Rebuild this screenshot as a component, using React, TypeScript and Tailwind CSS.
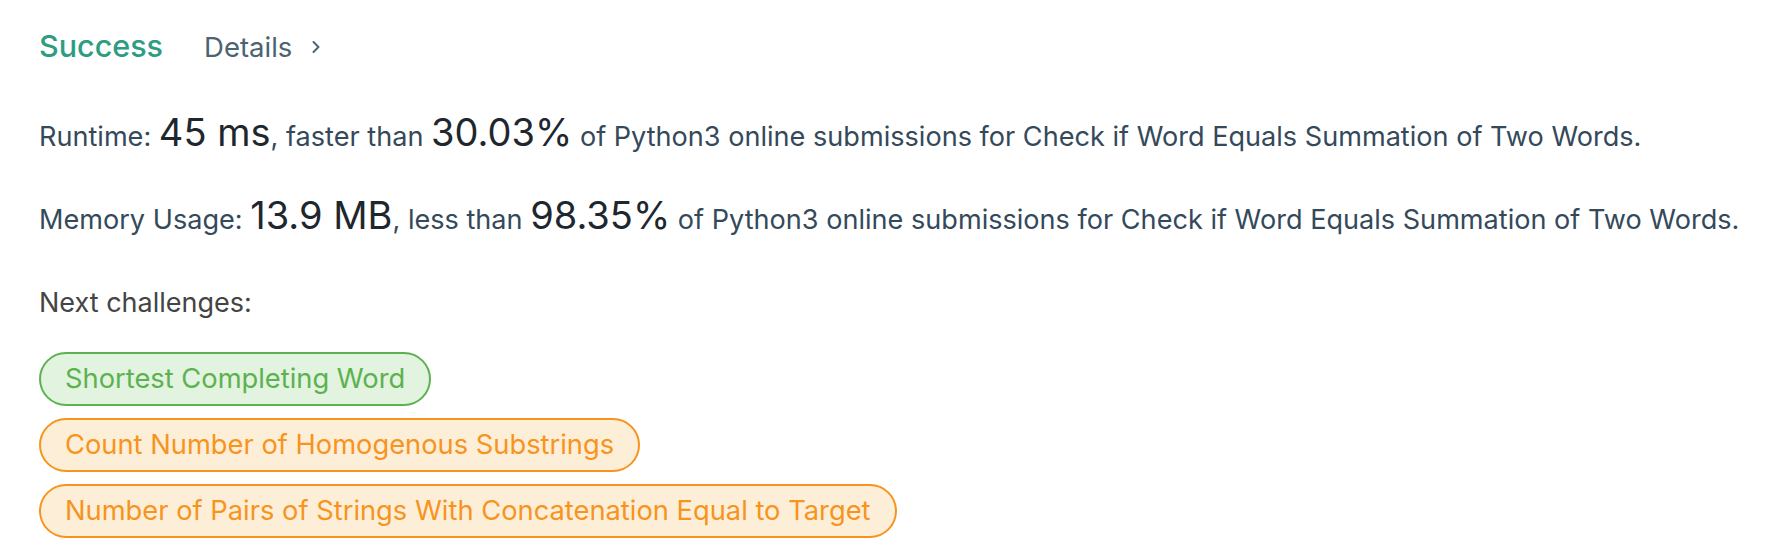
export default function App() {
  const challenges = [
    { title: "Shortest Completing Word", level: "easy" },
    { title: "Count Number of Homogenous Substrings", level: "medium" },
    {
      title: "Number of Pairs of Strings With Concatenation Equal to Target",
      level: "medium",
    },
  ];

  return (
    <div className="min-h-[554px] bg-white pl-[39px] font-['Inter',sans-serif] whitespace-nowrap">
      <div className="flex items-baseline pt-[26px] leading-[40px]">
        <span className="text-[30.5px] font-medium text-[#2d9d82]">Success</span>
        <span className="ml-[41px] text-[27.5px] text-[#4b6373]">Details</span>
        <svg
          className="ml-[19px] self-center"
          width="10"
          height="14"
          viewBox="0 0 10 14"
          fill="none"
        >
          <path
            d="M2.5 2l5 5-5 5"
            stroke="#4b6373"
            strokeWidth="2"
            strokeLinecap="round"
            strokeLinejoin="round"
          />
        </svg>
      </div>

      <p className="mt-[41px] text-[27.1px] leading-[48px] text-[#34495a]">
        Runtime: <span className="text-[38px] text-[#1f272e]">45 ms</span>,
        faster than <span className="text-[38px] text-[#1f272e]">30.03%</span>{" "}
        of Python3 online submissions for Check if Word Equals Summation of Two
        Words.
      </p>

      <p className="mt-[30px] text-[27.1px] leading-[48px] text-[#34495a]">
        Memory Usage:{" "}
        <span className="text-[38px] text-[#1f272e]">13.9 MB</span>, less than{" "}
        <span className="text-[38px] text-[#1f272e]">98.35%</span> of Python3
        online submissions for Check if Word Equals Summation of Two Words.
      </p>

      <p className="mt-[39px] text-[27px] leading-[40px] text-[#444]">
        Next challenges:
      </p>

      <div className="mt-[29px] flex flex-col items-start gap-[12px]">
        {challenges.map((c) => (
          <a
            key={c.title}
            href="#"
            className={
              c.level === "easy"
                ? "flex h-[54px] items-center rounded-full border-2 border-[#5cb250] bg-[#e2f3df] px-[24px] text-[27.3px] text-[#5cb250]"
                : "flex h-[54px] items-center rounded-full border-2 border-[#f7941d] bg-[#fdeed8] px-[24px] text-[27.3px] text-[#f7941d]"
            }
          >
            {c.title}
          </a>
        ))}
      </div>
    </div>
  );
}
